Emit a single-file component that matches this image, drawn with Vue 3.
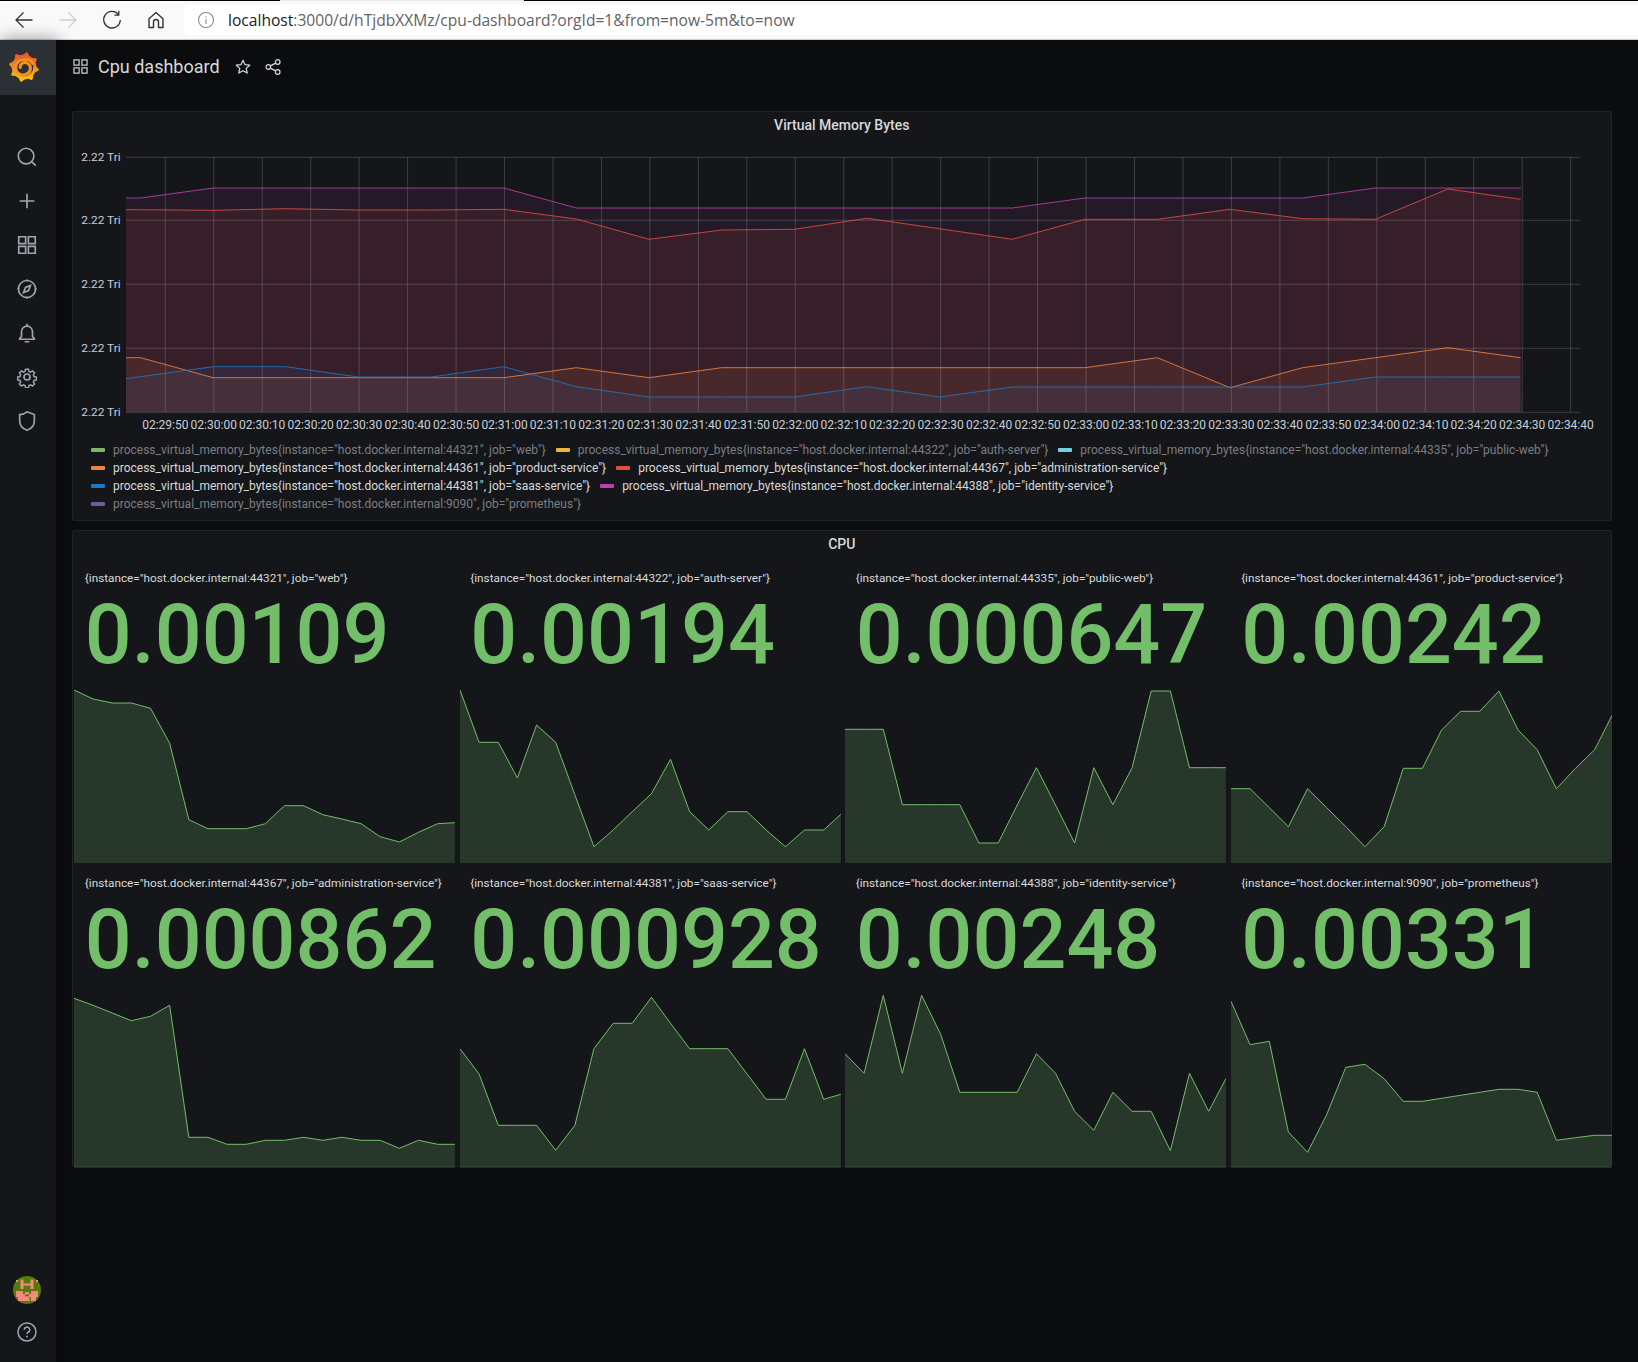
<script setup>
const xAt = i => 140.6 + 72.63 * i
const BOTTOM = 412.3
const zy = z => 110 + z / 3

const purpleZ = [234,234,234,234,234,294,294,294,294,294,294,294,264,264,264,264,234,234,234]
const redZ = [301,296,300,300,298,327,388,360,358,325,356,388,328,328,298,326,328,237,268]
const orangeZ = [803,803,803,803,803,773,803,773,773,773,773,773,773,743,833,773,743,713,743]
const blueZ = [770,770,801,801,770,830,861,861,861,830,861,831,831,831,831,831,801,801,801]

function seriesPts(first, zs) {
  const pts = [[126, zy(first)], [140.6, zy(first)]]
  zs.forEach((z, i) => pts.push([xAt(i + 1), zy(z)]))
  return pts
}
function makeSeries(color, first, zs) {
  const p = seriesPts(first, zs)
  const line = p.map(a => a[0].toFixed(1) + ',' + a[1].toFixed(1)).join(' ')
  const area = `126,${BOTTOM} ${line} ${p[p.length - 1][0].toFixed(1)},${BOTTOM}`
  return { color, line, area }
}
const series = [
  makeSeries('#BA43A9', 264, purpleZ),
  makeSeries('#E24D42', 299, redZ),
  makeSeries('#EF843C', 743, orangeZ),
  { ...makeSeries('#1F78C1', 806, blueZ) }
]
series[3].line = '126,' + zy(806) + ' ' + series[3].line.split(' ').slice(2).join(' ')
series[3].area = `126,${BOTTOM} ${series[3].line} 1522.6,${BOTTOM}`

const hLines = [157.3, 220.3, 284.3, 348.3, 412.3]
const yLabels = [156.7, 219.5, 283.2, 347.5, 412]
const vLines = Array.from({ length: 30 }, (_, i) => {
  const total = 29 * 60 + 50 + i * 10
  const m = Math.floor(total / 60) % 60
  const s = total % 60
  const h = 2
  const label = [h, m, s].map(n => String(n).padStart(2, '0')).join(':')
  return { x: 165.3 + 48.46 * i, label }
})

const legend = [
  { c: '#7EB26D', on: false, t: 'process_virtual_memory_bytes{instance="host.docker.internal:44321", job="web"}' },
  { c: '#EAB839', on: false, t: 'process_virtual_memory_bytes{instance="host.docker.internal:44322", job="auth-server"}' },
  { c: '#6ED0E0', on: false, t: 'process_virtual_memory_bytes{instance="host.docker.internal:44335", job="public-web"}' },
  { c: '#EF843C', on: true, t: 'process_virtual_memory_bytes{instance="host.docker.internal:44361", job="product-service"}' },
  { c: '#E24D42', on: true, t: 'process_virtual_memory_bytes{instance="host.docker.internal:44367", job="administration-service"}' },
  { c: '#1F78C1', on: true, t: 'process_virtual_memory_bytes{instance="host.docker.internal:44381", job="saas-service"}' },
  { c: '#BA43A9', on: true, t: 'process_virtual_memory_bytes{instance="host.docker.internal:44388", job="identity-service"}' },
  { c: '#705DA0', on: false, t: 'process_virtual_memory_bytes{instance="host.docker.internal:9090", job="prometheus"}' }
]

const W = 381
const H = 173
const rawStats = [
  { l: '{instance="host.docker.internal:44321", job="web"}', v: '0.00109', b: 475, z: [475,502,514,514,530,635,864,891,891,891,876,822,822,849,862,876,915,931,902,876,873] },
  { l: '{instance="host.docker.internal:44322", job="auth-server"}', v: '0.00194', b: 475, z: [475,632,632,739,580,632,789,945,895,840,786,683,840,895,840,840,895,945,895,895,848] },
  { l: '{instance="host.docker.internal:44335", job="public-web"}', v: '0.000647', b: 475, z: [593,593,593,819,819,819,819,934,934,820,708,820,934,708,819,708,478,478,708,708,708] },
  { l: '{instance="host.docker.internal:44361", job="product-service"}', v: '0.00242', b: 475, z: [771,771,828,885,771,828,885,945,885,710,710,595,539,539,478,595,654,771,710,654,552] },
  { l: '{instance="host.docker.internal:44367", job="administration-service"}', v: '0.000862', b: 399, z: [409,430,453,476,463,430,826,826,847,847,835,835,826,835,826,835,835,859,835,847,847] },
  { l: '{instance="host.docker.internal:44381", job="saas-service"}', v: '0.000928', b: 399, z: [560,636,790,790,790,865,790,560,484,484,406,484,560,560,560,636,712,712,560,712,697] },
  { l: '{instance="host.docker.internal:44388", job="identity-service"}', v: '0.00248', b: 399, z: [575,634,400,634,400,517,691,691,691,691,575,634,748,805,691,748,748,866,634,748,650] },
  { l: '{instance="host.docker.internal:9090", job="prometheus"}', v: '0.00331', b: 399, z: [418,548,538,810,871,758,616,607,650,718,718,709,700,691,682,682,691,835,827,820,820] }
]
const stats = rawStats.map(s => {
  const line = s.z
    .map((z, i) => ((i * W) / 19.9 > W ? W : (i * W) / 19.9).toFixed(1) + ',' + ((z - s.b) / 3).toFixed(1))
    .join(' ')
  return { label: s.l, value: s.v, line, area: `0,${H} ${line} ${W},${H}` }
})

const gear = (() => {
  const pts = []
  const n = 8
  for (let i = 0; i < n; i++) {
    const a = (i / n) * Math.PI * 2 - Math.PI / 2 + 0.2
    const step = Math.PI / n
    const seq = [[a - step * 0.6, 12.4], [a - step * 0.12, 15], [a + step * 0.12, 15], [a + step * 0.6, 12.4]]
    seq.forEach(([ang, r]) => pts.push((16 + r * Math.cos(ang)).toFixed(2) + ',' + (16 + r * Math.sin(ang)).toFixed(2)))
  }
  return pts.join(' ')
})()
</script>

<template>
  <div class="page">
    <div class="topstrip">
      <div class="strip-dark strip-a"></div>
      <div class="strip-light"></div>
      <div class="strip-dark strip-b"></div>
    </div>
    <header class="browser">
      <div class="nav">
        <svg class="nav-ico" viewBox="0 0 24 24" fill="none" stroke="#333" stroke-width="1.3">
          <path d="M20.500 12H4M11.500 4.500 4 12l7.500 7.500" />
        </svg>
        <svg class="nav-ico" viewBox="0 0 24 24" fill="none" stroke="#cfcfcf" stroke-width="1.3">
          <path d="M3.500 12H20M12.500 4.500 20 12l-7.500 7.500" />
        </svg>
        <svg class="nav-ico" viewBox="0 0 24 24" fill="none" stroke="#333" stroke-width="1.3">
          <path d="M18.500 6.500A8.300 8.300 0 1 0 20.300 12M18.800 2.800v4.400h-4.400" />
        </svg>
        <svg class="nav-ico" viewBox="0 0 24 24" fill="none" stroke="#333" stroke-width="1.4">
          <path d="M12 4.500 5 10.800V19.500h4.500v-5.500a2.500 2.500 0 0 1 5 0v5.500H19v-8.700z" stroke-linejoin="round" />
        </svg>
      </div>
      <div class="address">
        <svg class="info" viewBox="0 0 18 18" fill="none" stroke="#8a8a8a" stroke-width="1.1">
          <circle cx="9" cy="9" r="7.500" />
          <path d="M9 8v5M9 5.200v1.200" />
        </svg>
        <span class="url"><span class="host">localhost</span>:3000/d/hTjdbXXMz/cpu-dashboard?orgId=1&amp;from=now-5m&amp;to=now</span>
      </div>
    </header>

    <div class="main">
      <aside class="sidebar">
        <div class="logo">
          <svg class="logo-svg" viewBox="0 0 32 32">
            <defs>
              <linearGradient id="lg" x1="0" y1="0" x2="0" y2="1">
                <stop offset="0" stop-color="#ef4b2a" />
                <stop offset="0.5" stop-color="#f58a1f" />
                <stop offset="1" stop-color="#fcc90f" />
              </linearGradient>
            </defs>
            <polygon :points="gear" fill="url(#lg)" />
            <circle cx="16" cy="16" r="9.300" fill="#2b3034" />
            <path d="M24.800 12.500C21.500 6.500 9 6.800 7.800 15.500C7 22 13.500 25.700 18.500 23.200C23.500 20.700 23.700 14.500 19.500 12.200C16 10.300 11.700 13 12.200 16.500" fill="none" stroke="#f7921e" stroke-width="3" stroke-linecap="round" />
          </svg>
        </div>
        <nav class="side-icons">
          <svg class="side-ico" viewBox="0 0 24 24" fill="none">
            <circle cx="11" cy="11" r="8.500" />
            <path d="m17.300 17.300 4.200 4.200" />
          </svg>
          <svg class="side-ico" viewBox="0 0 24 24" fill="none">
            <path d="M12 4v16M4 12h16" />
          </svg>
          <svg class="side-ico" viewBox="0 0 24 24" fill="none">
            <path d="M3 3h7.500v7.500H3zM13.500 3H21v7.500h-7.500zM3 13.500h7.500V21H3zM13.500 13.500H21V21h-7.500z" />
          </svg>
          <svg class="side-ico" viewBox="0 0 24 24" fill="none">
            <circle cx="12" cy="12" r="9.300" />
            <path d="M15.800 8.200 13.700 13.700 8.200 15.800 10.300 10.300z" />
            <path d="M12 1.500v2M12 20.500v2M1.500 12h2M20.500 12h2" />
          </svg>
          <svg class="side-ico" viewBox="0 0 24 24" fill="none">
            <path d="M6 16V10.500a6 6 0 0 1 12 0V16l2 1.800v1H4v-1zM12 2v2.500M9.500 21.500h5" />
          </svg>
          <svg class="side-ico" viewBox="0 0 24 24" fill="none">
            <circle cx="12" cy="12" r="3.300" />
            <path d="M10.200 2.500h3.600l.6 2.800 1.900.8 2.400-1.500 2.500 2.500-1.500 2.400.8 1.900 2.800.6v3.600l-2.800.6-.8 1.900 1.500 2.400-2.500 2.500-2.400-1.500-1.900.8-.6 2.800h-3.600l-.6-2.800-1.900-.8-2.400 1.500-2.500-2.500 1.500-2.400-.8-1.900-2.800-.6v-3.600l2.800-.6.8-1.900-1.500-2.400 2.500-2.500 2.400 1.500 1.900-.8z" transform="translate(1.200 1.200) scale(.9)" />
          </svg>
          <svg class="side-ico" viewBox="0 0 24 24" fill="none">
            <path d="M12 2 20 5v7c0 5-3.300 8.500-8 10-4.700-1.500-8-5-8-10V5c3 0 5.500-1 8-3z" />
          </svg>
        </nav>
        <div class="side-bottom">
          <svg class="avatar" viewBox="0 0 28 28">
            <circle cx="14" cy="14" r="14" fill="#557a0c" />
            <path fill="#f48a7a" d="M7.500 3.500h3v4h7v-4h3v9.500h-3V9.500h-7V13h-3zM3 15h7v3h2v-2h4v2h2v-3h7v6h-2v4h-5v-4h-6v4H5v-4H3zM11.500 21h5v4h-5zM3 4h2v2H3zM23 4h2v2h-2z" />
            <rect x="12" y="18.500" width="4" height="1.800" fill="#557a0c" />
          </svg>
          <svg class="help" viewBox="0 0 20 20" fill="none">
            <circle cx="10" cy="10" r="9" stroke="#9fa7b3" stroke-width="1.500" />
            <path d="M7.300 7.800a2.700 2.700 0 1 1 3.800 2.500c-.8.400-1.100.9-1.100 1.700" stroke="#9fa7b3" stroke-width="1.500" />
            <circle cx="10" cy="14.400" r="1" fill="#9fa7b3" />
          </svg>
        </div>
      </aside>

      <main class="content">
        <div class="dash-head">
          <svg class="dash-ico" viewBox="0 0 16 16" fill="none">
            <path d="M1 1h5.500v5.500H1zM9.500 1H15v5.500H9.500zM1 9.500h5.500V15H1zM9.500 9.500H15V15H9.500z" />
          </svg>
          <h1 class="dash-title">Cpu dashboard</h1>
          <svg class="head-ico star" viewBox="0 0 16 16" fill="none">
            <path d="M8 1.300 10 5.700l4.700.5-3.500 3.200 1 4.700L8 11.700l-4.200 2.400 1-4.700L1.300 6.200 6 5.700z" stroke-linejoin="round" />
          </svg>
          <svg class="head-ico share" viewBox="0 0 16 16" fill="none">
            <circle cx="3.300" cy="8" r="2.300" />
            <circle cx="12.700" cy="3" r="2.300" />
            <circle cx="12.700" cy="13" r="2.300" />
            <path d="m5.300 6.900 5.400-2.800M5.300 9.100l5.400 2.800" />
          </svg>
        </div>

        <section class="panel graph-panel">
          <div class="panel-title">Virtual Memory Bytes</div>
          <svg class="graph" viewBox="72 139 1539.500 296" width="1539.500" height="296">
            <polygon v-for="s in series" :key="s.color + 'a'" :points="s.area" :fill="s.color" fill-opacity="0.1" />
            <line v-for="v in vLines" :key="v.x" :x1="v.x" :x2="v.x" y1="157.300" y2="412.300" class="grid" />
            <line v-for="h in hLines" :key="h" x1="126" x2="1580" :y1="h" :y2="h" class="grid" />
            <polyline v-for="s in series" :key="s.color + 'l'" :points="s.line" fill="none" :stroke="s.color" stroke-opacity="0.85" stroke-width="1" />
            <text v-for="y in yLabels" :key="y" x="120.500" :y="y + 4.300" text-anchor="end" class="tick ytick">2.22 Tri</text>
            <text v-for="v in vLines" :key="v.label" :x="v.x" y="429" text-anchor="middle" class="tick">{{ v.label }}</text>
          </svg>
          <div class="legend">
            <div v-for="item in legend" :key="item.t" class="legend-item" :class="{ off: !item.on }">
              <i class="swatch" :style="{ background: item.c }"></i>
              <span>{{ item.t }}</span>
            </div>
          </div>
        </section>

        <section class="panel stat-panel">
          <div class="panel-title">CPU</div>
          <div class="stat-grid">
            <div v-for="s in stats" :key="s.label" class="stat">
              <div class="stat-label">{{ s.label }}</div>
              <div class="stat-value">{{ s.value }}</div>
              <svg class="spark" :viewBox="`0 0 ${W} ${H}`" preserveAspectRatio="none">
                <polygon :points="s.area" fill="#73BF69" fill-opacity="0.2" />
                <polyline :points="s.line" fill="none" stroke="#73BF69" stroke-width="1" />
              </svg>
            </div>
          </div>
        </section>
      </main>
    </div>
  </div>
</template>

<style>
html, body { margin: 0; background: #0b0c0e; }
</style>

<style scoped>
.page {
  width: 1638px;
  height: 1362px;
  display: flex;
  flex-direction: column;
  overflow: hidden;
  background: #0b0c0e;
  font-family: Roboto, "Liberation Sans", sans-serif;
}
.topstrip { display: flex; height: 1px; flex: none; }
.strip-dark { background: #000; }
.strip-a { width: 280px; }
.strip-light { width: 244px; background: #e8e8e8; }
.strip-b { flex: 1; }
.browser {
  flex: none;
  height: 38px;
  display: flex;
  background: #f9f9fa;
  border-bottom: 1px solid #d0d0d0;
  box-sizing: content-box;
}
.nav {
  width: 184px;
  flex: none;
  display: flex;
  align-items: center;
  padding-left: 12px;
  box-sizing: border-box;
  gap: 20px;
  margin-top: -1px;
}
.nav-ico { width: 24px; height: 24px; flex: none; }
.address {
  flex: 1;
  margin-top: 4px;
  height: 30px;
  background: #fff;
  border-radius: 5px 0 0 5px;
  display: flex;
  align-items: center;
}
.info { width: 18px; height: 18px; margin-left: 13px; flex: none; }
.url {
  margin-left: 13px;
  font-family: "Open Sans", "Noto Sans", sans-serif;
  font-size: 15.600px;
  color: #5f6368;
  white-space: nowrap;
}
.host { color: #202124; }

.main { flex: 1; display: flex; min-height: 0; }
.sidebar {
  width: 56px;
  flex: none;
  background: #141619;
  display: flex;
  flex-direction: column;
  align-items: center;
  box-shadow: 2px 0 16px rgba(0, 0, 0, 0.45);
}
.logo {
  width: 100%;
  height: 55px;
  background: #2b3034;
  display: flex;
  align-items: center;
  justify-content: center;
  padding-right: 8px;
  padding-bottom: 2px;
  box-sizing: border-box;
}
.logo-svg { width: 32px; height: 32px; }
.side-icons {
  margin-top: 51px;
  padding-right: 2px;
  display: flex;
  flex-direction: column;
  align-items: center;
  gap: 22px;
}
.side-ico { width: 22px; height: 22px; stroke: #a0a6b0; stroke-width: 1.800; }
.side-bottom {
  margin-top: auto;
  padding: 0 2px 20px 0;
  display: flex;
  flex-direction: column;
  align-items: center;
  gap: 18px;
}
.avatar { width: 28px; height: 28px; display: block; }
.help { width: 20px; height: 20px; display: block; }

.content {
  flex: 1;
  padding: 0 26.500px 0 16px;
  min-width: 0;
}
.dash-head {
  height: 71px;
  display: flex;
  align-items: center;
  padding: 0 0 17.500px 1px;
  box-sizing: border-box;
}
.dash-ico { width: 15px; height: 15px; stroke: #c7d0d9; stroke-width: 1.300; flex: none; }
.dash-title {
  margin: 0 0 0 10px;
  font-size: 18px;
  font-weight: 400;
  color: #d8d9da;
  line-height: 24px;
}
.head-ico { width: 16px; height: 16px; stroke: #d8d9da; stroke-width: 1.200; flex: none; }
.star { margin-left: 15px; }
.share { margin-left: 14px; }

.panel {
  background: #141619;
  border-radius: 3px;
  box-shadow: inset 0 0 0 1px #202226;
}
.panel-title {
  height: 28px;
  line-height: 28px;
  text-align: center;
  font-size: 14px;
  font-weight: 500;
  color: #d8d9da;
}
.graph-panel { height: 410px; }
.graph { display: block; }
.grid { stroke: #fff; stroke-opacity: 0.17; stroke-width: 1; }
.tick { font-size: 12px; fill: #c7d0d9; font-family: Roboto, "Liberation Sans", sans-serif; }
.ytick { font-size: 11.800px; }
.legend {
  padding: 5.500px 0 0 19px;
  display: flex;
  flex-wrap: wrap;
  width: 1510px;
  box-sizing: border-box;
}
.legend-item {
  height: 18px;
  display: flex;
  align-items: center;
  margin-right: 10px;
  font-size: 12px;
  color: #d8d9da;
  white-space: nowrap;
}
.legend-item.off { color: #7b7e82; }
.swatch { width: 14px; height: 4px; margin-right: 8px; border-radius: 1px; flex: none; }

.stat-panel { height: 637px; margin-top: 8.500px; }
.stat-grid {
  display: grid;
  grid-template-columns: repeat(4, 1fr);
  column-gap: 4.600px;
  padding-left: 2.300px;
}
.stat { height: 305px; min-width: 0; display: flex; flex-direction: column; }
.stat-label {
  padding: 12.500px 0 0 10.500px;
  font-size: 11.770px;
  line-height: 16px;
  color: #d8d9da;
  white-space: nowrap;
}
.stat-value {
  height: 94.500px;
  line-height: 97px;
  padding-left: 10.500px;
  font-size: 82.600px;
  font-weight: 500;
  color: #73BF69;
  white-space: nowrap;
}
.spark { display: block; width: 100%; height: 173px; margin-top: auto; }
</style>
